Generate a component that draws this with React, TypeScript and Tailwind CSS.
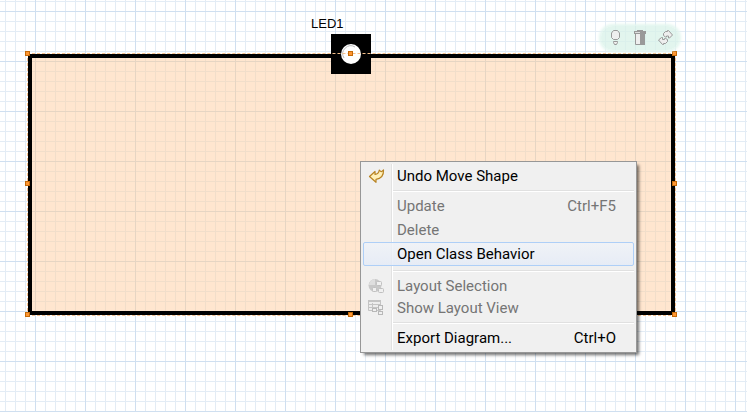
import React from "react";

const gridLines =
  "bg-[linear-gradient(to_right,#cfdff0_1px,transparent_1px),linear-gradient(to_bottom,#cfdff0_1px,transparent_1px),linear-gradient(to_right,#e3ecf5_1px,transparent_1px),linear-gradient(to_bottom,#e3ecf5_1px,transparent_1px)] bg-[size:50px_50px,50px_50px,10px_10px,10px_10px] bg-[position:35px_11px,35px_11px,5px_1px,5px_1px]";

function Handle({ place }: { place: string }) {
  return <span className={`absolute size-[5px] border border-[#c46a08] bg-[#ff9632] ${place}`} />;
}

function UndoIcon() {
  return (
    <svg width="17" height="16" viewBox="0 0 17 16" aria-hidden="true">
      <path
        d="M1.500 8.500 7 3.500v3c2.500-.3 4-2 4.300-4.500.9 1.200 1.500 1.600 2.300 1.600L15.500 2c.3 5.500-2 8.500-7.500 9.300v3z"
        fill="#fff0b8"
        stroke="#b88322"
        strokeWidth="1.200"
        strokeLinejoin="round"
      />
    </svg>
  );
}

function LayoutIcon() {
  return (
    <svg width="16" height="16" viewBox="0 0 16 16" aria-hidden="true">
      <circle cx="7" cy="7.500" r="6.500" fill="#c8c8c8" />
      <path d="M1 7a6 6 0 0 1 6-6v6z" fill="#dedede" />
      <g fill="#f0f0f0" stroke="#c0c0c0">
        <rect x="8.500" y="3.500" width="5" height="4" rx="1" />
        <rect x="4.500" y="9.500" width="4" height="4" rx="1" />
        <rect x="10.500" y="10.500" width="5" height="4" rx="1" />
      </g>
    </svg>
  );
}

function ViewIcon() {
  return (
    <svg width="16" height="16" viewBox="0 0 16 16" aria-hidden="true">
      <path d="M.5.5h12v10H.5zM.5 4.500h12M.5 7.500h12M4.500 3v7" fill="#ededed" stroke="#c4c4c4" />
      <path d="M0 0h13v2H0z" fill="#c4c4c4" />
      <g fill="#f0f0f0" stroke="#b8b8b8">
        <rect x="10.500" y="5.500" width="4" height="4" />
        <rect x="4.500" y="8.500" width="4" height="3" />
        <rect x="10.500" y="11.500" width="4" height="3" />
      </g>
    </svg>
  );
}

type ItemProps = {
  label: string;
  keys?: string;
  icon?: React.ReactNode;
  disabled?: boolean;
  active?: boolean;
  height?: string;
};

function Item({ label, keys, icon, disabled, active, height = "h-6" }: ItemProps) {
  return (
    <button
      role="menuitem"
      disabled={disabled}
      className={`relative flex w-full items-center rounded-[2px] border pr-[17px] text-left ${height} ${
        active ? "border-[#aecff7] bg-linear-to-b from-[#f0f3f8]/80 to-[#e4ebf7]/80" : "border-transparent"
      } ${disabled ? "text-[#757575]" : "text-black"}`}
    >
      <span className="flex w-[33px] shrink-0 pl-1">{icon}</span>
      <span className="grow">{label}</span>
      <span>{keys}</span>
    </button>
  );
}

function Separator({ space }: { space: string }) {
  return <hr className={`ml-[30px] h-[2px] border-0 border-t border-[#e0e0e0] bg-white ${space}`} />;
}

export default function App() {
  return (
    <main className={`relative min-h-screen overflow-hidden bg-white pt-[54px] pr-[72px] pb-24 pl-7 ${gridLines}`}>
      <section className="relative h-[261px] border-4 border-black bg-white">
        <div className="absolute inset-0 bg-[#ffe6cf] bg-[linear-gradient(to_right,#e6d5c3_1px,transparent_1px),linear-gradient(to_bottom,#e6d5c3_1px,transparent_1px),linear-gradient(to_right,#f1deca_1px,transparent_1px),linear-gradient(to_bottom,#f1deca_1px,transparent_1px)] bg-[size:50px_50px,50px_50px,10px_10px,10px_10px] bg-[position:3px_3px,3px_3px,3px_3px,3px_3px]" />
        <div className="absolute -top-6 left-[299px] size-10 bg-black p-[10px]">
          <svg width="20" height="20" viewBox="0 0 20 20" aria-hidden="true">
            <circle cx="10" cy="10" r="10" fill="#fff" />
            <path d="M3 14A8 8 0 0 1 14 3" fill="none" stroke="#bbb" />
          </svg>
        </div>
        <div className="absolute -inset-[5px] border border-dashed border-[#f6c08c]" />
        <Handle place="-top-[7px] -left-[7px]" />
        <Handle place="-top-[7px] left-[316px]" />
        <Handle place="-top-[7px] -right-[6px]" />
        <Handle place="top-[123px] -left-[7px]" />
        <Handle place="top-[123px] -right-[6px]" />
        <Handle place="-bottom-[6px] -left-[7px]" />
        <Handle place="-bottom-[6px] left-[316px]" />
        <Handle place="-bottom-[6px] -right-[6px]" />
      </section>

      <span className="absolute top-4 left-[311px] font-['Liberation_Sans',sans-serif] text-[13px] leading-4 text-black">LED1</span>

      <div className="absolute top-[26px] right-[68px] flex h-6 w-[78px] items-center justify-between rounded-full bg-[#d8f1e8]/75 pr-[6px] pl-[9px] shadow-[0_0_3px_2px_#e3f6ef]">
        <button aria-label="Suggestions">
          <svg width="11" height="16" viewBox="0 0 11 16" fill="#eee" stroke="#999" aria-hidden="true">
            <path d="M3.500 9.500 1.500 7.500V3l2-2.500h4l2 2.500v4.500l-2 2z M3.500 11.500h4v1l-1 2h-2l-1-2z" />
          </svg>
        </button>
        <button aria-label="Delete">
          <svg width="12" height="16" viewBox="0 0 12 16" aria-hidden="true">
            <path d="M1.500 3.500v11h9v-11z" fill="#eee" stroke="#999" />
            <path d="M0 1h3V0h6v1h3v3H0zM6 3h5v12H6z" fill="#999" />
            <path d="M1 2h5v1H1z" fill="#ddd" />
          </svg>
        </button>
        <button aria-label="Refresh">
          <svg width="15" height="16" viewBox="0 0 15 16" fill="#eee" stroke="#999" aria-hidden="true">
            <path d="M5.500 5.500V3.500l2-2h2V.5h1l4 4.500-3 3h-1v-2h-2v1h-1zM9.500 9.500v2l-2 2h-2v1h-1l-4-4.500 3-2.500h1v2h2v-1h1z" />
          </svg>
        </button>
      </div>

      <div
        role="menu"
        className="absolute top-[161px] left-[360px] w-[277px] border border-[#979797] bg-[#f0f0f0] p-[2px] font-[Roboto,sans-serif] text-[15px] leading-5 shadow-[3px_3px_3px_-1px_#00000090]"
      >
        <div className="absolute top-[2px] bottom-[2px] left-[30px] w-[2px] border-r border-white bg-[#e2e2e2]" />
        <Item label="Undo Move Shape" icon={<UndoIcon />} />
        <Separator space="my-[2px]" />
        <Item label="Update" keys="Ctrl+F5" disabled />
        <Item label="Delete" disabled />
        <Item label="Open Class Behavior" active />
        <Separator space="mt-1 mb-[3px]" />
        <Item label="Layout Selection" icon={<LayoutIcon />} disabled height="h-[22px]" />
        <Item label="Show Layout View" icon={<ViewIcon />} disabled height="h-[22px]" />
        <Separator space="mt-[3px] mb-[2px]" />
        <Item label="Export Diagram..." keys="Ctrl+O" />
      </div>
    </main>
  );
}
